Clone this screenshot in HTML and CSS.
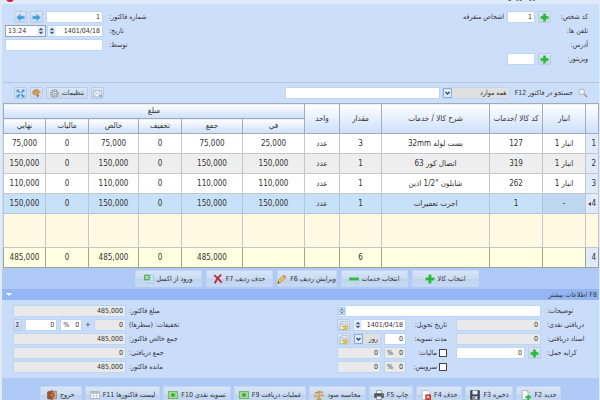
FILE: index.html
```html
<!DOCTYPE html>
<html lang="fa" dir="rtl">
<head>
	<meta charset="utf-8">
	<meta name="viewport" content="width=device-width, initial-scale=1">
	<title>فاکتور فروش</title>
	<link rel="stylesheet" href="styles.css">
</head>
<body>

	<!-- icon set -->
	<svg class="sprite" aria-hidden="true">
		<symbol id="plus" viewBox="0 0 16 16"><path d="M5.5 1h5v4.5H15v5h-4.500V15h-5v-4.500H1v-5h4.500z" fill="#27b53c" stroke="#8fdc98"/></symbol>
		<symbol id="minus" viewBox="0 0 16 16"><path d="M0 5.500h16v5H0z" fill="#35b548" stroke="#8fdc98"/></symbol>
		<symbol id="arrow-left" viewBox="0 0 16 16"><path d="M1 8l7-6.500v4h7v5H8v4z" fill="#3d9be0" stroke="#8cc6f0"/></symbol>
		<symbol id="arrow-right" viewBox="0 0 16 16"><path d="M15 8L8 1.500v4H1v5h7v4z" fill="#3d9be0" stroke="#8cc6f0"/></symbol>
		<symbol id="expand" viewBox="0 0 16 16"><path d="M1 1h5L4.500 2.500l3 3-2 2-3-3L1 6zM15 1v5l-1.500-1.500-3 3-2-2 3-3L10 1zM1 15v-5l1.500 1.500 3-3 2 2-3 3L6 15zM15 15h-5l1.500-1.500-3-3 2-2 3 3L15 10z" fill="#3c96da"/></symbol>
		<symbol id="palette" viewBox="0 0 16 16"><path d="M1 6c0-4 5-6 9-5 3 1 3 4 1 5s-1 3-2 4C5 12 1 10 1 6z" fill="#dba467" stroke="#b87838"/><circle cx="4.500" cy="5" r="1.200" fill="#d6423a"/><circle cx="8" cy="3.500" r="1.200" fill="#5aa83e"/><path d="M15 3.500L9 11" stroke="#e08a2c" stroke-width="2"/><path d="M9.500 9.500l3 2.500-3.500 3z" fill="#b23a28"/></symbol>
		<symbol id="gear" viewBox="0 0 16 16"><circle cx="8" cy="8" r="6.500" fill="none" stroke="#8b8f96" stroke-width="2.500" stroke-dasharray="2.500 1.600"/><circle cx="8" cy="8" r="4.500" fill="#e8eaed" stroke="#8b8f96" stroke-width="1.500"/><circle cx="8" cy="8" r="1.800" fill="#8b8f96"/></symbol>
		<symbol id="mail" viewBox="0 0 16 16"><path d="M1 3h14v11H1z" fill="#f3f7fa" stroke="#8ba3b8"/><path d="M1 3l7 6 7-6M1 14l5-6M15 14l-5-6" fill="none" stroke="#8ba3b8"/><path d="M10 11h4l-1-2 3 3-3 3v-2h-3z" fill="#58b0dc"/></symbol>
		<symbol id="search" viewBox="0 0 16 16"><circle cx="6" cy="6" r="4.500" fill="#e9f3fb" stroke="#a6afb9" stroke-width="1.500"/><path d="M9.500 9.500l5 5" stroke="#a39a90" stroke-width="2.500"/></symbol>
		<symbol id="excel" viewBox="0 0 16 16"><path d="M5 2h10v12H5z" fill="#e4f5fb" stroke="#7dbfd2"/><path d="M10 2v12M5 6h10M5 10h10" stroke="#7dbfd2"/><path d="M0 1h9v9H0z" fill="#5cae5a"/><path d="M2 3l5 5M7 3L2 8" stroke="#fff" stroke-width="1.500"/></symbol>
		<symbol id="cross" viewBox="0 0 16 16"><path d="M2 2c4 3 8 7 12 12M13 1C9 5 5 9 3 15" fill="none" stroke="#bd2b34" stroke-width="3"/></symbol>
		<symbol id="pencil" viewBox="0 0 16 16"><path d="M1 15l1.500-5L11 1.500l3.500 3.500L6 13.500z" fill="#f2c14c" stroke="#b98526"/><path d="M11 1.500l3.500 3.500-2 2L9 3.500z" fill="#e08b7c"/><path d="M1 15l1-3 2 2z" fill="#333"/></symbol>
		<symbol id="exit" viewBox="0 0 16 16"><path d="M1 3l8-2v14l-8-1z" fill="#a5522f" stroke="#7c3618"/><path d="M9 2h6v12H9z" fill="#d7b49a" stroke="#9b6140"/><path d="M11 4v8" stroke="#8e4a2b" stroke-width="2"/><circle cx="7" cy="8" r="1" fill="#f3d36a"/></symbol>
		<symbol id="list" viewBox="0 0 16 16"><path d="M.5 2.500h15v11H.5z" fill="#fff" stroke="#8d99a6"/><path d="M1 3h14v3H1z" fill="#b4bec8"/><path d="M5.500 3v10M10.500 3v10M1 9.500h14" stroke="#b4bec8"/></symbol>
		<symbol id="money" viewBox="0 0 16 16"><path d="M.5 2.500h15v11H.5z" fill="#8bd07c" stroke="#4c9c43"/><path d="M2.500 4.500h11v7h-11z" fill="none" stroke="#c3ecb8"/><circle cx="8" cy="8" r="2.800" fill="#3f9a3d"/></symbol>
		<symbol id="scales" viewBox="0 0 16 16"><path d="M8 1v13M4 14.500h8M2 4l12-1" stroke="#c98e36" stroke-width="1.800"/><path d="M0 10l3-6 3 6zM10 9l3-6 3 6z" fill="none" stroke="#c98e36"/><path d="M0 9.500h6c0 3-6 3-6 0zM10 8.500h6c0 3-6 3-6 0z" fill="#dba548"/></symbol>
		<symbol id="printer" viewBox="0 0 16 16"><path d="M4 1h8v5H4z" fill="#fff" stroke="#777"/><path d="M1 6h14v6H1z" fill="#55595e" stroke="#3b3e42"/><path d="M4 10h8v5H4z" fill="#eef2f5" stroke="#666"/><path d="M12 7.500h2" stroke="#71d36a"/></symbol>
		<symbol id="sheet-delete" viewBox="0 0 16 16"><path d="M2 1h9l3 3v11H2z" fill="#fff" stroke="#a2acb6"/><path d="M7 7h9v9H7z" fill="#cf3433"/><path d="M9.500 9.500l4 4M13.500 9.500l-4 4" stroke="#fff" stroke-width="1.500"/></symbol>
		<symbol id="disk" viewBox="0 0 16 16"><path d="M1 1h14v14H1z" fill="#3d4654" stroke="#262d38"/><path d="M4 1h8v6H4z" fill="#edf3f8"/><path d="M4 10h8v5H4z" fill="#cfd7df"/><path d="M5.500 11h2v3h-2z" fill="#3d4654"/></symbol>
		<symbol id="sheet-new" viewBox="0 0 16 16"><path d="M2 1h8l3 3v11H2z" fill="#fff" stroke="#93a1ae"/><path d="M10 1v3h3" fill="none" stroke="#93a1ae"/><path d="M10 7.500h3V10h3v3h-3v3h-3v-3H7v-3h3z" fill="#2fb743"/></symbol>
		<symbol id="sheet-star" viewBox="0 0 16 16"><path d="M5 1h9v12H5z" fill="#fff" stroke="#8fa0b3"/><path d="M2 4h9v11H2z" fill="#eef4fa" stroke="#8fa0b3"/><path d="M4 7h5M4 9.500h5" stroke="#8fa0b3"/><path d="M11 6.500l1.500 3 3.500.4-2.500 2.300.7 3.300-3.200-1.700L7.800 15.500l.7-3.300L6 9.900l3.500-.4z" fill="#f4c322" stroke="#dca514" stroke-width=".6"/></symbol>
		<symbol id="spin" viewBox="0 0 8 10"><path d="M4 1l3 3H1zM4 9L1 6h6z" fill="#3e5a82"/></symbol>
		<symbol id="spin-wide" viewBox="0 0 10 12"><path d="M.5.5h9v5h-9zM.5 6.500h9v5h-9z" fill="#d5e6fb" stroke="#86abd8"/><path d="M5 2l2 2H3zM5 10L3 8h4z" fill="#3e5a82"/></symbol>
	</svg>

	<header class="titlebar">
		<svg class="app" viewBox="0 0 10 10"><circle cx="5" cy="5" r="5" fill="#d0212f"/></svg>
		<h1>فاکتور فروش</h1>
	</header>

	<main class="window">

		<section class="invoice-head">
			<div class="person">
				<label for="person">کد شخص:</label>
				<div class="line">
					<button class="tool" aria-label="شخص جدید"><svg><use href="#plus"/></svg></button>
					<input id="person" class="short" value="1">
					<span>اشخاص متفرقه</span>
				</div>
				<span>تلفن ها:</span><span></span>
				<span>آدرس:</span><span></span>
				<label for="visitor">ویزیتور:</label>
				<div class="line">
					<button class="tool" aria-label="ویزیتور جدید"><svg><use href="#plus"/></svg></button>
					<input id="visitor" class="short">
				</div>
			</div>

			<div class="number">
				<label for="number">شماره فاکتور:</label>
				<div class="line browse">
					<input id="number" class="grow" value="1">
					<button class="tool" aria-label="بعدی"><svg><use href="#arrow-right"/></svg></button>
					<button class="tool" aria-label="قبلی"><svg><use href="#arrow-left"/></svg></button>
				</div>
				<label for="date">تاریخ:</label>
				<div class="line tight">
					<div class="spinbox grow"><input id="date" value="1401/04/18"><button aria-label="تغییر تاریخ"><svg><use href="#spin"/></svg></button></div>
					<div class="spinbox time"><button aria-label="تغییر ساعت"><svg><use href="#spin"/></svg></button><input aria-label="ساعت" value="13:24"></div>
				</div>
				<label for="by">توسط:</label>
				<div class="line"><input id="by" class="grow"></div>
			</div>
		</section>

		<section class="searchbar">
			<svg class="glass"><use href="#search"/></svg>
			<label for="search">جستجو در فاکتور F12</label>
			<select class="scope" aria-label="محدوده جستجو"><option>همه موارد</option></select>
			<input id="search" class="query">
			<div class="tools">
				<button class="tool" aria-label="ارسال"><svg><use href="#mail"/></svg></button>
				<button class="tool wide">تنظیمات<svg><use href="#gear"/></svg></button>
				<button class="tool" aria-label="رنگ"><svg><use href="#palette"/></svg></button>
				<button class="tool" aria-label="تمام صفحه"><svg><use href="#expand"/></svg></button>
			</div>
		</section>

		<div class="items-frame">
			<table class="items">
				<colgroup>
					<col class="c-row"><col class="c-store"><col class="c-code"><col class="c-desc"><col class="c-qty"><col class="c-unit">
					<col class="c-fee"><col class="c-sum"><col class="c-off"><col class="c-net"><col class="c-tax"><col class="c-final">
				</colgroup>
				<thead>
					<tr>
						<th rowspan="2"></th>
						<th rowspan="2">انبار</th>
						<th rowspan="2">کد کالا /خدمات</th>
						<th rowspan="2">شرح کالا / خدمات</th>
						<th rowspan="2">مقدار</th>
						<th rowspan="2">واحد</th>
						<th colspan="6">مبلغ</th>
					</tr>
					<tr><th>في</th><th>جمع</th><th>تخفیف</th><th>خالص</th><th>مالیات</th><th>نهایي</th></tr>
				</thead>
				<tbody>
					<tr><th>1</th><td>انبار 1</td><td>127</td><td>بست لوله 32mm</td><td>3</td><td>عدد</td><td>25,000</td><td>75,000</td><td>0</td><td>75,000</td><td>0</td><td>75,000</td></tr>
					<tr class="alt"><th>2</th><td>انبار 1</td><td>319</td><td>اتصال کور 63</td><td>1</td><td>عدد</td><td>150,000</td><td>150,000</td><td>0</td><td>150,000</td><td>0</td><td>150,000</td></tr>
					<tr><th>3</th><td>انبار 1</td><td>262</td><td>شابلون "1/2 اذین</td><td>1</td><td>عدد</td><td>110,000</td><td>110,000</td><td>0</td><td>110,000</td><td>0</td><td>110,000</td></tr>
					<tr class="current"><th>4<i class="marker"></i></th><td>-</td><td>1</td><td>اجرت تعمیرات</td><td>1</td><td>عدد</td><td>150,000</td><td>150,000</td><td>0</td><td>150,000</td><td>0</td><td>150,000</td></tr>
					<tr class="blank"><td></td><td></td><td></td><td></td><td></td><td></td><td></td><td></td><td></td><td></td><td></td><td></td></tr>
				</tbody>
				<tfoot>
					<tr><th>4</th><td></td><td></td><td></td><td>6</td><td></td><td></td><td>485,000</td><td>0</td><td>485,000</td><td>0</td><td>485,000</td></tr>
				</tfoot>
			</table>
		</div>

		<nav class="row-actions">
			<button>انتخاب کالا<svg><use href="#plus"/></svg></button>
			<button>انتخاب خدمات<svg><use href="#minus"/></svg></button>
			<button class="narrow">ویرایش ردیف F6<svg><use href="#pencil"/></svg></button>
			<button>حذف ردیف F7<svg><use href="#cross"/></svg></button>
			<button>ورود از اکسل<svg><use href="#excel"/></svg></button>
		</nav>

		<button class="more-title">F8 اطلاعات بیشتر<i class="caret"></i></button>

		<section class="more">
			<div class="details">
				<label for="note">توضیحات:</label>
				<div class="spinbox note"><input id="note"><button aria-label="بازکردن توضیحات"><svg><use href="#spin-wide"/></svg></button></div>

				<label for="cash">دریافتی نقدی:</label>
				<input id="cash" value="0" readonly>
				<label class="second" for="delivery">تاریخ تحویل:</label>
				<div class="line">
					<div class="spinbox grow"><input id="delivery" value="1401/04/18"><button aria-label="تغییر تاریخ تحویل"><svg><use href="#spin"/></svg></button></div>
					<button class="tool" aria-label="یادآور تحویل"><svg><use href="#sheet-star"/></svg></button>
				</div>

				<label for="docs">اسناد دریافتی:</label>
				<input id="docs" value="0" readonly>
				<label class="second" for="term">مدت تسویه:</label>
				<div class="line">
					<input id="term" class="percent" value="0">
					<select class="grow" aria-label="واحد مدت"><option>روز</option></select>
					<button class="tool" aria-label="یادآور تسویه"><svg><use href="#sheet-star"/></svg></button>
				</div>

				<label for="freight">کرایه حمل:</label>
				<div class="line">
					<button class="tool" aria-label="کرایه جدید"><svg><use href="#plus"/></svg></button>
					<input id="freight" class="grow" value="0">
				</div>
				<label class="second"><input type="checkbox">مالیات:</label>
				<div class="line">
					<input class="percent" aria-label="درصد مالیات" dir="ltr" value="%   0" readonly>
					<input class="grow" aria-label="مبلغ مالیات" value="0" readonly>
				</div>

				<label class="second service"><input type="checkbox">سرویس:</label>
				<div class="line">
					<input class="percent" aria-label="درصد سرویس" dir="ltr" value="%   0" readonly>
					<input class="grow" aria-label="مبلغ سرویس" value="0" readonly>
				</div>
			</div>

			<div class="totals">
				<label for="total">مبلغ فاکتور:</label>
				<input id="total" value="485,000" readonly>
				<label for="lines-off">تخفیفات: (سطرها)</label>
				<div class="line">
					<input id="lines-off" class="grow" value="0" readonly>
					<span>+</span>
					<input class="percent" aria-label="درصد تخفیف" dir="ltr" value="%   0">
					<input class="grow" aria-label="مبلغ تخفیف" value="0">
					<button class="tool sigma">Σ</button>
				</div>
				<label for="net">جمع خالص فاکتور:</label>
				<input id="net" value="485,000" readonly>
				<label for="received">جمع دریافتی:</label>
				<input id="received" value="0" readonly>
				<label for="rest">مانده فاکتور:</label>
				<input id="rest" value="485,000" readonly>
			</div>
		</section>

		<footer class="commands">
			<button>جدید F2<svg><use href="#sheet-new"/></svg></button>
			<button>ذخیره F3<svg><use href="#disk"/></svg></button>
			<button>حذف F4<svg><use href="#sheet-delete"/></svg></button>
			<button>چاپ F5<svg><use href="#printer"/></svg></button>
			<button>محاسبه سود<svg><use href="#scales"/></svg></button>
			<button>عملیات دریافت F9<svg><use href="#money"/></svg></button>
			<button>تسویه نقدی F10<svg><use href="#money"/></svg></button>
			<button>لیست فاکتورها F11<svg><use href="#list"/></svg></button>
			<button>خروج<svg><use href="#exit"/></svg></button>
		</footer>
	</main>
</body>
</html>
```
FILE: styles.css
```css
:root
{
	--frame: #dfeafb;
	--panel: #ccdffa;
	--panel-low: #c9dcfa;
	--bar: #b0caf8;
	--bar-dark: #94b6f4;
	--line: #b9c6d8;
	--field-border: #bcd6f4;
	--readonly: #e9e9e9;
	--text: #333;
	--row: 12px;
}

*
{
	box-sizing: border-box;
}

html
{
	overflow: hidden;
}

body
{
	margin: 0;
	background: var(--frame);
	color: var(--text);
	font: 7px/10px "DejaVu Sans Condensed", "DejaVu Sans", sans-serif;
}

button, input, select
{
	font: inherit;
	color: inherit;
	margin: 0;
}

.sprite
{
	display: none;
}

/* window frame */
.titlebar
{
	display: flex;
	justify-content: space-between;
	align-items: flex-end;
	flex-direction: row-reverse;
	height: 4px;
	padding: 0 52px 2px 6px;
	overflow: hidden;
}

.titlebar h1
{
	margin: 0;
	font-size: 8px;
	font-weight: normal;
	line-height: 10px;
}

.titlebar .app
{
	width: 8px;
	height: 8px;
}

.window
{
	margin: 0 1px 0 2px;
	background: var(--panel);
}

/* fields */
input, select
{
	min-width: 0;
	height: var(--row);
	padding: 0 2px;
	background: #fff;
	border: 1px solid var(--field-border);
	border-radius: 0;
	text-align: right;
}

input[readonly]
{
	background: var(--readonly);
}

input[type=checkbox]
{
	appearance: none;
	width: 8px;
	height: 8px;
	padding: 0;
	border-color: #444;
}

select
{
	appearance: none;
	padding: 0 2px 0 12px;
	background: #e0e0e0 url("data:image/svg+xml,%3Csvg xmlns='http://www.w3.org/2000/svg' width='10' height='10'%3E%3Cpath d='M.5.5h8v9h-8z' fill='%23deebfc' stroke='%2386abd8'/%3E%3Cpath d='M2.500 4l2 2 2-2' fill='none' stroke='%23334f78' stroke-width='1.500'/%3E%3C/svg%3E") no-repeat left center;
}

.line
{
	display: flex;
	align-items: center;
	gap: 3px;
}

.tight
{
	gap: 1px;
}

.browse
{
	padding-left: 9px;
}

.grow
{
	flex: 1;
}

.percent
{
	width: 22px;
}

.short
{
	width: 28px;
}

.spinbox
{
	display: flex;
	height: var(--row);
	background: #fff;
	border: 1px solid var(--field-border);
}

.spinbox input
{
	flex: 1;
	width: 100%;
	height: auto;
	border: 0;
}

.spinbox button
{
	display: flex;
	align-items: center;
	padding: 0;
	border: 0;
	background: #e6f0fc;
}

.spinbox svg
{
	width: 8px;
	height: 8px;
}

.spinbox.time
{
	width: 41px;
	border-color: #9aa3ad;
}

.time input
{
	text-align: left;
}

.tool
{
	display: flex;
	align-items: center;
	justify-content: center;
	gap: 3px;
	width: 13px;
	height: var(--row);
	padding: 0;
	background: linear-gradient(#d9e6f5, #c6d7ec);
	border: 1px solid #bccde0;
	border-radius: 1px;
}

.tool svg
{
	flex: none;
	width: 9px;
	height: 9px;
}

.tool.wide
{
	width: 42px;
}

.tool.sigma
{
	width: 9px;
}

/* invoice head */
.invoice-head
{
	display: flex;
	justify-content: space-between;
	height: 79px;
	padding: 7px 11px 0 3px;
	border-bottom: 1px solid var(--line);
}

.person, .number
{
	display: grid;
	grid-auto-rows: var(--row);
	align-content: start;
	align-items: center;
	row-gap: 2px;
}

.person
{
	grid-template-columns: 37px auto;
}

.number
{
	grid-template-columns: auto 98px;
	column-gap: 6px;
	text-align: left;
}

/* search */
.searchbar
{
	display: flex;
	align-items: center;
	height: 20px;
	padding: 0 11px 0 12px;
}

.glass
{
	width: 10px;
	height: 10px;
	margin-left: 5px;
}

.scope
{
	width: 68px;
	margin: 0 5px 0 2px;
}

.query
{
	width: 27%;
}

.tools
{
	display: flex;
	gap: 3px;
	margin-right: auto;
}

/* items */
.items-frame
{
	padding-left: 1px;
}

.items
{
	width: 100%;
	table-layout: fixed;
	border-collapse: collapse;
	background: #fff;
	font-size: 8px;
	text-align: center;
}

.items th, .items td
{
	height: 20px;
	padding: 0;
	border: 1px solid #c4c6c9;
	font-weight: normal;
	white-space: nowrap;
}

.items thead th
{
	height: 15px;
	border-color: #a5abb5;
	background: linear-gradient(#fff, #ccdffa);
}

.items tbody th, .items tfoot th
{
	padding-right: 2px;
	background: #dfeafb;
	text-align: right;
}

.items .alt td		{	background: #eee;	}
.items .current td	{	background: #c7e1f9;	border-color: #adc9e2;	}
.items .current td:nth-child(2)	{	background: #bdd7f0;	}
.items .blank td	{	height: 34px;	background: #fff9e1;	}
.items tfoot td		{	background: #ffffe1;	}
.items tfoot td, .items tfoot th	{	border-color: #a3a396;	}

.c-row		{	width: 13px;	}
.c-store	{	width: 43px;	}
.c-code		{	width: 53px;	}
.c-desc		{	width: 108px;	}
.c-qty		{	width: 42px;	}
.c-unit		{	width: 35px;	}
.c-fee		{	width: 62px;	}
.c-sum		{	width: 61px;	}
.c-off		{	width: 43px;	}
.c-net		{	width: 50px;	}
.c-tax		{	width: 43px;	}
.c-final	{	width: 42px;	}

.marker
{
	display: inline-block;
	border: 2px solid transparent;
	border-right: 3px solid #445;
	border-left: 0;
}

/* button bars */
.row-actions, .commands
{
	display: flex;
	justify-content: center;
	background: var(--bar);
}

.row-actions
{
	gap: 4px;
	padding: 2px 0 2px 12px;
}

.commands
{
	gap: 3px;
	padding: 8px 0 2px;
}

.row-actions button, .commands button
{
	display: flex;
	align-items: center;
	justify-content: center;
	gap: 3px;
	height: 17px;
	padding: 0 4px;
	background: linear-gradient(#d7e5f6, #cbdcf2 50%, #bdd2ee 51%, #c8daf2);
	border: 1px solid #c3d6f0;
	border-radius: 1px;
	white-space: nowrap;
}

.commands button
{
	min-width: 42px;
}

.row-actions button
{
	width: 67px;
	padding: 0;
}

.row-actions .narrow
{
	width: 60px;
}

.row-actions svg, .commands svg
{
	flex: none;
	width: 10px;
	height: 10px;
}

/* more info */
.more-title
{
	display: flex;
	justify-content: space-between;
	align-items: center;
	width: 100%;
	height: 11px;
	padding: 0 2px 0 4px;
	background: var(--bar-dark);
	border: 0;
}

.caret
{
	border: 3px solid transparent;
	border-top-color: #fff;
	border-bottom: 0;
}

.more
{
	display: flex;
	justify-content: space-between;
	padding: 5px 8px 5px 11px;
	background: var(--panel-low);
}

.details, .totals
{
	display: grid;
	grid-auto-rows: var(--row);
	align-content: start;
	align-items: center;
	row-gap: 2px;
	white-space: nowrap;
}

.details
{
	grid-template-columns: 44px 85px 38px 69px;
	column-gap: 6px;
	text-align: left;
}

.note
{
	grid-column: 2 / 5;
}

.second
{
	display: flex;
	align-items: center;
	gap: 2px;
	padding-right: 3px;
}

.service
{
	grid-column: 3;
}

.totals
{
	grid-template-columns: auto 113px;
	column-gap: 3px;
	text-align: left;
}
```
